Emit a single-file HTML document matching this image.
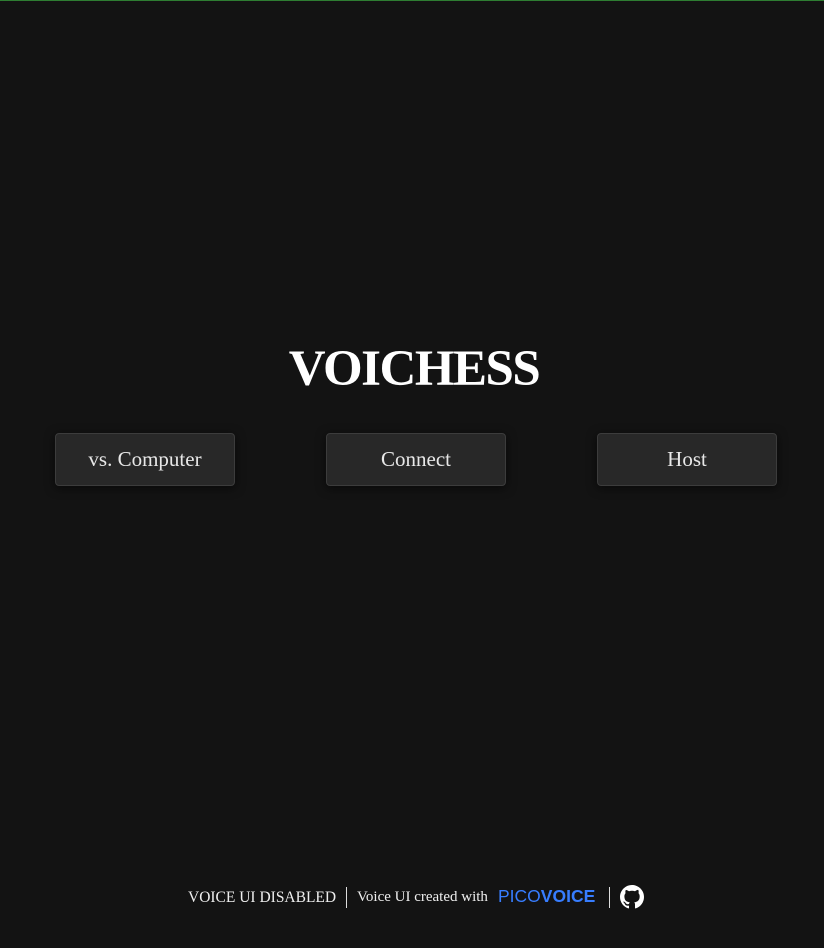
<!DOCTYPE html>
<html><head><meta charset="utf-8"><style>
html,body{margin:0;padding:0}
body{width:824px;height:948px;background:#131313;position:relative;overflow:hidden;font-family:"Liberation Serif",serif;color:#eee;border-top:1px solid #2e7d32;box-sizing:border-box}
h1{position:absolute;top:340px;left:0;width:828px;text-align:center;margin:0;font-size:51px;font-weight:bold;letter-spacing:-1.5px;color:#fff;line-height:56px}
.btn{position:absolute;top:432px;width:178px;height:51px;background:#282828;border:1px solid #3c3c3c;border-radius:4px;box-shadow:0 2px 10px rgba(0,0,0,.6);text-align:center;line-height:51px;font-size:21px;color:#e8e8e8}
.foot{position:absolute;top:884px;left:0;width:824px;height:26px;font-size:15.5px;color:#eee}
.foot span{position:absolute;top:4px;white-space:nowrap}
.sep{position:absolute;top:2px;width:1px;height:21px;background:#ddd}
</style></head><body>
<h1>VOICHESS</h1>
<div class="btn" style="left:55px">vs. Computer</div>
<div class="btn" style="left:326px">Connect</div>
<div class="btn" style="left:597px">Host</div>
<div class="foot">
<span style="left:188px">VOICE UI DISABLED</span>
<div class="sep" style="left:346px"></div>
<span style="left:357px;font-size:15px">Voice UI created with</span>
<span style="left:498px;top:1px;font-family:'Liberation Sans',sans-serif;font-size:17.5px;color:#377dff">PICO<b>VOICE</b></span>
<div class="sep" style="left:609px"></div>
<svg style="position:absolute;left:620px;top:0" width="24" height="24" viewBox="0 0 16 16"><path fill="#fff" d="M8 0C3.58 0 0 3.58 0 8c0 3.54 2.29 6.53 5.47 7.59.4.07.55-.17.55-.38 0-.19-.01-.82-.01-1.49-2.01.37-2.530-.49-2.69-.94-.09-.23-.48-.94-.82-1.13-.28-.15-.68-.52-.01-.53.63-.01 1.08.58 1.23.82.72 1.21 1.87.87 2.33.66.07-.52.28-.87.51-1.07-1.78-.2-3.64-.89-3.64-3.95 0-.87.31-1.59.82-2.15-.08-.2-.36-1.02.08-2.12 0 0 .67-.21 2.2.82.64-.18 1.32-.27 2-.27.68 0 1.36.09 2 .27 1.53-1.04 2.2-.82 2.2-.82.44 1.1.16 1.92.08 2.12.51.56.82 1.27.82 2.15 0 3.07-1.87 3.75-3.65 3.95.29.25.54.73.54 1.48 0 1.07-.01 1.93-.01 2.2 0 .21.15.46.55.38A8.013 8.013 0 0016 8c0-4.42-3.58-8-8-8z"/></svg>
</div>
</body></html>
